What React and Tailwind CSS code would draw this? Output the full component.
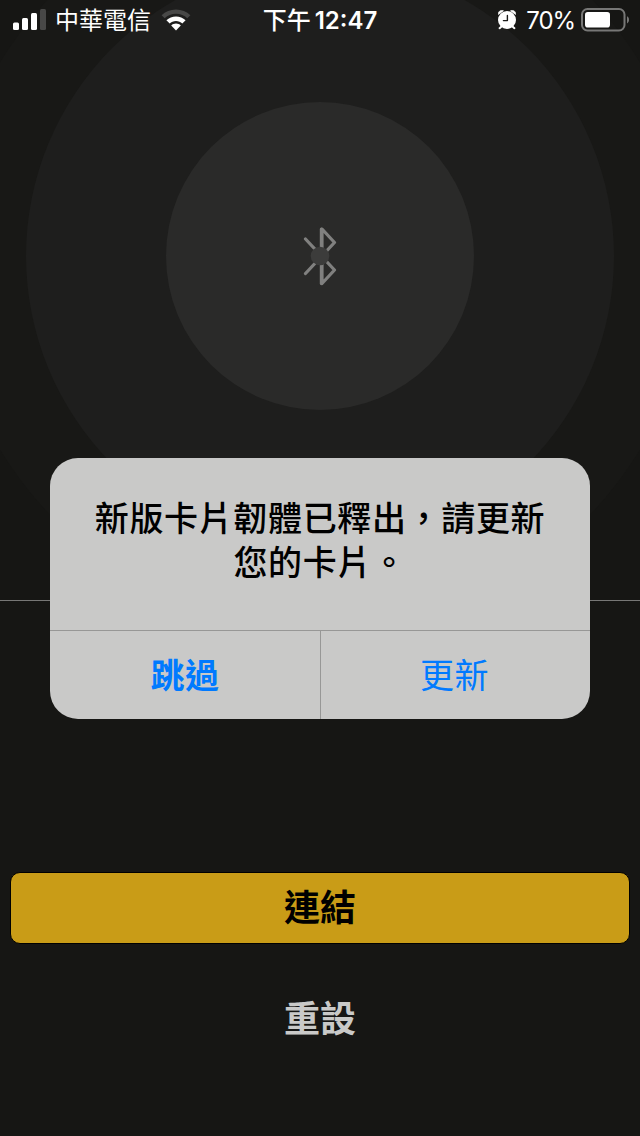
function Signal() {
  return (
    <svg width="34" height="22" viewBox="0 0 34 22" className="shrink-0">
      <rect x="0" y="13.5" width="6" height="7.5" rx="1.5" fill="#fff" />
      <rect x="9" y="9" width="6" height="12" rx="1.5" fill="#fff" />
      <rect x="18" y="4" width="6" height="17" rx="1.5" fill="#fff" />
      <rect x="27" y="0" width="6" height="21" rx="1.5" fill="#484847" />
    </svg>
  );
}

function Wifi() {
  return (
    <svg width="30" height="22" viewBox="0 0 30 22" className="shrink-0">
      <path d="M15 0.5C9.4 0.5 4.3 2.7 0.6 6.2L3.7 9.3C6.6 6.5 10.6 4.8 15 4.8S23.4 6.5 26.3 9.3L29.4 6.2C25.7 2.7 20.6 0.5 15 0.5Z" fill="#484847" />
      <path d="M15 7.4C11.3 7.4 8 8.8 5.4 11.3L8.7 14.6C10.3 13 12.5 12.1 15 12.1S19.7 13 21.3 14.6L24.6 11.3C22 8.8 18.7 7.4 15 7.4Z" fill="#fff" />
      <path d="M15 14.6C13.2 14.6 11.5 15.3 10.2 16.5L15 21.4L19.8 16.5C18.5 15.3 16.8 14.6 15 14.6Z" fill="#fff" />
    </svg>
  );
}

function Alarm() {
  return (
    <svg width="18" height="20" viewBox="0 0 18 20" className="shrink-0">
      <g stroke="#fff" strokeWidth="2" strokeLinecap="round">
        <path d="M3.8 16.2L1.6 18.2M14.2 16.2L16.4 18.2" />
      </g>
      <path d="M0.5 4.4C-0.3 2 2.6 -0.6 5.4 0.8ZM17.5 4.4C18.3 2 15.4 -0.6 12.6 0.8Z" fill="#fff" stroke="#fff" strokeWidth="0.8" strokeLinejoin="round" />
      <circle cx="9" cy="10" r="9" fill="#fff" />
      <path d="M9.4 5.4V10.6H5.4" fill="none" stroke="#1b1b1a" strokeWidth="1.4" strokeLinecap="round" strokeLinejoin="round" />
    </svg>
  );
}

function Battery() {
  return (
    <svg width="49" height="24" viewBox="0 0 49 24" className="shrink-0">
      <rect x="1" y="1" width="42.5" height="21.5" rx="5.5" fill="none" stroke="#777776" strokeWidth="2" />
      <rect x="4" y="4" width="25" height="15.5" rx="2.8" fill="#fff" />
      <path d="M46 8.2C47.2 8.7 48 10 48 11.8S47.2 14.9 46 15.4Z" fill="#777776" />
    </svg>
  );
}

function StatusBar() {
  return (
    <header className="relative grid h-10 grid-cols-3 items-center text-2xl leading-[38px] text-white">
      <div className="flex items-center pl-[13px]">
        <Signal />
        <span className="ml-[8px] pt-[2px] whitespace-nowrap">中華電信</span>
        <span className="ml-[10px]"><Wifi /></span>
      </div>
      <div className="flex items-center justify-center gap-[4px] pt-[2px] font-medium whitespace-nowrap">
        <span>下午</span>
        <span className="font-semibold">12:47</span>
      </div>
      <div className="flex items-center justify-end pr-[10px]">
        <Alarm />
        <span className="mr-[6px] ml-[10px] pt-[2px] tracking-[-1.1px]">70%</span>
        <Battery />
      </div>
    </header>
  );
}

function Radar() {
  return (
    <svg width="640" height="600" viewBox="0 0 640 600" className="absolute inset-0">
      <circle cx="320" cy="256" r="374" fill="#181816" />
      <circle cx="320" cy="256" r="294" fill="#1e1e1d" />
      <circle cx="320" cy="256" r="154" fill="#2a2a29" />
      <g fill="none" stroke="#80807f" strokeWidth="3.2" strokeLinecap="round" strokeLinejoin="round">
        <path d="M305.5 239L334.5 270L322 283.5V229L334.5 242.5L305.5 273.5" />
        <path d="M321.4 229V283.5" />
      </g>
      <circle cx="320" cy="256" r="9.3" fill="#3c3c3b" />
    </svg>
  );
}

function Alert() {
  return (
    <div className="absolute inset-x-[50px] top-[458px] flex h-[261px] flex-col overflow-hidden rounded-[28px] bg-[#c9c9c8]" role="alertdialog">
      <p className="h-[172px] pt-[39px] text-center text-[34px] leading-[44px] font-medium tracking-[0.65px] text-black">
        新版卡片韌體已釋出，請更新
        <br />
        您的卡片。
      </p>
      <div className="grid flex-1 grid-cols-2 border-t border-[#979796] text-[34px] tracking-[0.5px] text-[#007aff]">
        <button className="pt-[1px] font-bold">跳過</button>
        <button className="border-l border-[#979796] pt-[1px] pr-[2px]">更新</button>
      </div>
    </div>
  );
}

export default function App() {
  return (
    <div lang="zh-Hant" className="relative flex h-[1136px] w-[640px] flex-col overflow-hidden bg-[#161614] font-['Inter','Noto_Sans_CJK_TC',sans-serif]">
      <section className="relative h-[601px] border-b border-[#777776]">
        <Radar />
        <StatusBar />
      </section>
      <main className="flex flex-1 flex-col px-[10px] pt-[271px]">
        <button className="h-[72px] rounded-[10px] border border-black bg-[#c99c17] text-[36px] font-bold text-black">連結</button>
        <button className="mt-[39px] h-[72px] text-[36px] font-bold text-[#c9c9c8]">重設</button>
      </main>
      <Alert />
    </div>
  );
}
